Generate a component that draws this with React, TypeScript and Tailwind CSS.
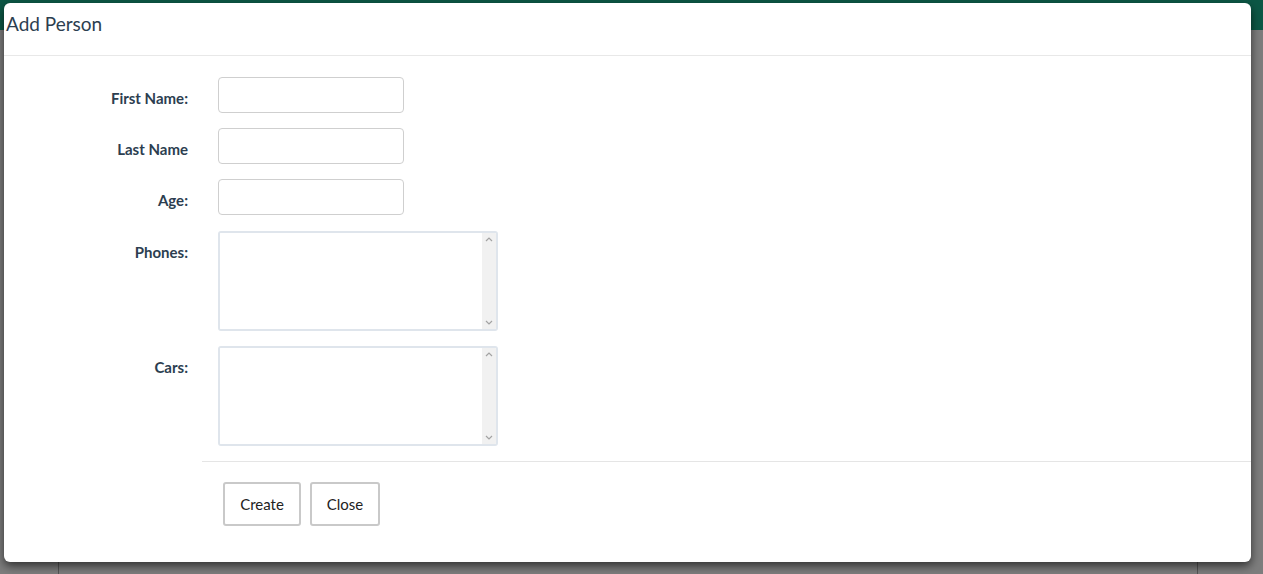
import React from "react";

const font = { fontFamily: "Lato, 'Open Sans', sans-serif" };

function TextRow({ label }: { label: string }) {
  return (
    <div className="flex items-start">
      <label className="w-[184px] shrink-0 pt-[11px] text-right text-[15px] font-bold leading-[20px] text-[#2c3e50]">
        {label}
      </label>
      <input
        type="text"
        className="ml-[30px] h-[36px] w-[186px] rounded-[4px] border border-[#cfcfcf] bg-white px-2 text-[15px] outline-none"
      />
    </div>
  );
}

function AreaRow({ label }: { label: string }) {
  return (
    <div className="flex items-start">
      <label className="w-[184px] shrink-0 pt-[11px] text-right text-[15px] font-bold leading-[20px] text-[#2c3e50]">
        {label}
      </label>
      <div className="ml-[30px] flex h-[100px] w-[280px] overflow-hidden rounded-[3px] border-2 border-[#dfe5ec] bg-white">
        <textarea className="flex-1 resize-none bg-white p-2 text-[15px] outline-none" />
        {/* fake scrollbar */}
        <div className="flex w-[14px] flex-col items-center justify-between bg-[#f1f1f1] py-[3px] text-[#a3a3a3]">
          <svg width="8" height="6" viewBox="0 0 8 6" fill="none" stroke="currentColor" strokeWidth="1.2">
            <path d="M1 5 L4 2 L7 5" />
          </svg>
          <svg width="8" height="6" viewBox="0 0 8 6" fill="none" stroke="currentColor" strokeWidth="1.2">
            <path d="M1 1 L4 4 L7 1" />
          </svg>
        </div>
      </div>
    </div>
  );
}

export default function App() {
  return (
    <div className="relative h-[574px] w-full overflow-hidden bg-[#7d7d7d]" style={font}>
      {/* dimmed page behind the modal */}
      <div className="h-[30px] bg-[#0c5745]" />
      <div className="ml-[58px] h-[544px] w-[1140px] border-x border-[#555]" />

      {/* modal */}
      <div className="absolute left-[4px] top-[3px] flex h-[559px] w-[1247px] flex-col rounded-[6px] bg-white shadow-[0_4px_10px_rgba(0,0,0,0.6)]">
        <div className="h-[53px] border-b border-[#e8e8e8] px-[2px] pt-[8px]">
          <h4 className="text-[19px] font-normal leading-[26px] text-[#2c3e50]">Add Person</h4>
        </div>

        <div className="flex flex-col gap-[15px] pt-[21px]">
          <TextRow label="First Name:" />
          <TextRow label="Last Name" />
          <TextRow label="Age:" />
          <div className="flex flex-col gap-[15px] pt-[1px]">
            <AreaRow label="Phones:" />
            <AreaRow label="Cars:" />
          </div>
        </div>

        <div className="ml-[198px] mt-[15px] border-t border-[#e5e5e5] pl-[21px] pt-[20px]">
          <div className="flex gap-[9px]">
            <button className="h-[44px] w-[78px] rounded-[3px] border-2 border-[#c9c9c9] bg-white text-[15px] text-[#222]">
              Create
            </button>
            <button className="h-[44px] w-[70px] rounded-[3px] border-2 border-[#c9c9c9] bg-white text-[15px] text-[#222]">
              Close
            </button>
          </div>
        </div>
      </div>
    </div>
  );
}
